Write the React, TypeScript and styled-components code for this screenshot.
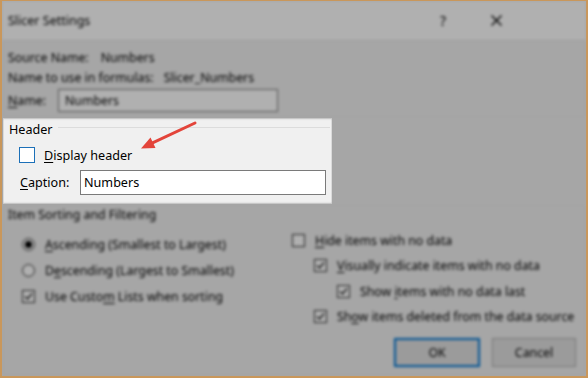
import React, { FC } from 'react';
import styled, { createGlobalStyle, css } from 'styled-components';

const GlobalStyle = createGlobalStyle`
  html, body {
    margin: 0;
    padding: 0;
    background: #a6a6a6;
  }
  body {
    font-family: "Noto Sans", "Open Sans", sans-serif;
    color: #000;
  }
`;

const dimmed = css`
  filter: blur(1.4px) brightness(0.69);
`;

const Window = styled.div`
  position: relative;
  box-sizing: border-box;
  width: 588px;
  height: 378px;
  border: 2px solid #c9975b;
  border-top-width: 1px;
  background: #a6a6a6;
  overflow: hidden;
  display: flex;
  flex-direction: column;
`;

const TitleBar = styled.div`
  ${dimmed};
  height: 39px;
  flex: none;
  display: flex;
  align-items: center;
  padding-left: 6px;
  background: #ffffff;
  font-size: 12.5px;
`;

const Title = styled.div`
  flex: 1;
`;

const TitleButton = styled.div<{ $width: number }>`
  width: ${(p) => p.$width}px;
  height: 39px;
  display: flex;
  align-items: center;
  justify-content: center;
  font-size: 14px;
`;

const TopFields = styled.div`
  ${dimmed};
  flex: none;
  background: #f0f0f0;
  padding: 7px 6px 6px;
  font-size: 12.3px;
`;

const InfoRow = styled.div`
  height: 20px;
  display: flex;
  align-items: center;
`;

const InfoValue = styled.span<{ $left: number }>`
  margin-left: ${(p) => p.$left}px;
`;

const NameRow = styled.div`
  margin-top: 2px;
  height: 23px;
  display: flex;
  align-items: center;
`;

const DimInput = styled.div<{ $width: number }>`
  box-sizing: border-box;
  width: ${(p) => p.$width}px;
  height: 23px;
  margin-left: 12px;
  border: 1px solid #7a7a7a;
  background: #fff;
  padding: 0 6px;
  display: flex;
  align-items: center;
`;

const HeaderRow = styled.div`
  flex: none;
  display: flex;
`;

const HeaderGroup = styled.div`
  box-sizing: border-box;
  width: 329px;
  height: 86px;
  margin-left: 1px;
  background: #f0f0f0;
  border: 1px solid #dadada;
  font-size: 12.6px;
`;

const Legend = styled.div`
  height: 19px;
  display: flex;
  align-items: center;
  gap: 5px;
  padding: 1px 1px 0 5px;

  &::after {
    content: '';
    flex: 1;
    height: 1px;
    margin-top: -4px;
    background: #dcdcdc;
  }
`;

const CheckRow = styled.div`
  height: 22px;
  margin-top: 5px;
  display: flex;
  align-items: center;
  padding-left: 15px;
  gap: 9px;
`;

const FocusBox = styled.div`
  box-sizing: border-box;
  width: 16px;
  height: 16px;
  border: 1px solid #1c70b8;
  background: #fff;
`;

const CaptionRow = styled.div`
  margin-top: 4px;
  display: flex;
  align-items: center;
  padding-left: 16px;
`;

const CaptionLabel = styled.span`
  width: 60px;
`;

const TextInput = styled.div`
  box-sizing: border-box;
  width: 246px;
  height: 25px;
  border: 1px solid #7a7a7a;
  background: #fff;
  padding-left: 3px;
  display: flex;
  align-items: center;
`;

const Key = styled.span`
  text-decoration: underline;
  text-underline-offset: 2px;
`;

const Sorting = styled.div`
  ${dimmed};
  flex: 1;
  background: #f0f0f0;
  padding-left: 6px;
  font-size: 12.3px;
`;

const SectionTitle = styled.div`
  height: 22px;
  line-height: 22px;
`;

const Columns = styled.div`
  display: flex;
`;

const LeftColumn = styled.div`
  box-sizing: border-box;
  width: 284px;
  padding: 5px 0 0 14px;
`;

const RightColumn = styled.div`
  padding-top: 2px;
`;

const OptionRow = styled.div<{ $height: number; $indent?: number }>`
  height: ${(p) => p.$height}px;
  display: flex;
  align-items: center;
  gap: 10px;
  padding-left: ${(p) => p.$indent ?? 0}px;
`;

const Radio = styled.div<{ $on?: boolean }>`
  box-sizing: border-box;
  width: 13px;
  height: 13px;
  border-radius: 50%;
  border: 1px solid #333;
  background: #fff;
  display: flex;
  align-items: center;
  justify-content: center;

  &::after {
    content: '';
    width: 7px;
    height: 7px;
    border-radius: 50%;
    background: ${(p) => (p.$on ? '#000' : 'transparent')};
  }
`;

const Box = styled.div`
  box-sizing: border-box;
  width: 13px;
  height: 13px;
  border: 1px solid #333;
  background: #fff;
  display: flex;
  align-items: center;
  justify-content: center;
`;

const ButtonRow = styled.div`
  margin-top: 9px;
  display: flex;
  justify-content: flex-end;
  gap: 12px;
  padding-right: 10px;
`;

const DialogButton = styled.div<{ $primary?: boolean }>`
  box-sizing: border-box;
  width: ${(p) => (p.$primary ? 86 : 84)}px;
  height: 29px;
  background: #e1e1e1;
  border: ${(p) => (p.$primary ? '2px solid #0078d7' : '1px solid #adadad')};
  display: flex;
  align-items: center;
  justify-content: center;
`;

const Arrow = styled.svg`
  position: absolute;
  left: 0;
  top: 0;
  pointer-events: none;
`;

const Check: FC = () => (
  <svg width="11" height="11" viewBox="0 0 11 11">
    <path d="M2 5.5 L4.5 8 L9 2.5" fill="none" stroke="#222" strokeWidth="1.4" />
  </svg>
);

const CheckOption: FC<{ label: React.ReactNode; indent?: number }> = ({ label, indent }) => (
  <OptionRow $height={25.3} $indent={indent}>
    <Box>
      <Check />
    </Box>
    <span>{label}</span>
  </OptionRow>
);

export default function App() {
  return (
    <>
      <GlobalStyle />
      <Window>
        <TitleBar>
          <Title>Slicer Settings</Title>
          <TitleButton $width={22}>?</TitleButton>
          <TitleButton $width={19} />
          <TitleButton $width={46}>
            <svg width="11" height="11" viewBox="0 0 11 11">
              <path d="M0.5 0.5 L10.5 10.5 M10.5 0.5 L0.5 10.5" stroke="#000" strokeWidth="1.4" />
            </svg>
          </TitleButton>
          <TitleButton $width={67} />
        </TitleBar>

        <TopFields>
          <InfoRow>
            Source Name:<InfoValue $left={12}>Numbers</InfoValue>
          </InfoRow>
          <InfoRow>
            Name to use in formulas:<InfoValue $left={10}>Slicer_Numbers</InfoValue>
          </InfoRow>
          <NameRow>
            <span>
              <Key>N</Key>ame:
            </span>
            <DimInput $width={220}>Numbers</DimInput>
          </NameRow>
        </TopFields>

        <HeaderRow>
          <HeaderGroup>
            <Legend>Header</Legend>
            <CheckRow>
              <FocusBox />
              <span>
                <Key>D</Key>isplay header
              </span>
            </CheckRow>
            <CaptionRow>
              <CaptionLabel>
                <Key>C</Key>aption:
              </CaptionLabel>
              <TextInput>Numbers</TextInput>
            </CaptionRow>
          </HeaderGroup>
        </HeaderRow>

        <Sorting>
          <SectionTitle>Item Sorting and Filtering</SectionTitle>
          <Columns>
            <LeftColumn>
              <OptionRow $height={26}>
                <Radio $on />
                <span>
                  <Key>A</Key>scending (Smallest to Largest)
                </span>
              </OptionRow>
              <OptionRow $height={26}>
                <Radio />
                <span>
                  D<Key>e</Key>scending (Largest to Smallest)
                </span>
              </OptionRow>
              <OptionRow $height={26}>
                <Box>
                  <Check />
                </Box>
                <span>
                  Use Custo<Key>m</Key> Lists when sorting
                </span>
              </OptionRow>
            </LeftColumn>
            <RightColumn>
              <OptionRow $height={25.3}>
                <Box />
                <span>
                  <Key>H</Key>ide items with no data
                </span>
              </OptionRow>
              <CheckOption
                indent={22}
                label={
                  <>
                    <Key>V</Key>isually indicate items with no data
                  </>
                }
              />
              <CheckOption
                indent={45}
                label={
                  <>
                    Show <Key>i</Key>tems with no data last
                  </>
                }
              />
              <CheckOption
                indent={22}
                label={
                  <>
                    Sh<Key>o</Key>w items deleted from the data source
                  </>
                }
              />
            </RightColumn>
          </Columns>
          <ButtonRow>
            <DialogButton $primary>OK</DialogButton>
            <DialogButton>Cancel</DialogButton>
          </ButtonRow>
        </Sorting>

        <Arrow width="588" height="378" viewBox="0 0 588 378">
          <line x1="193" y1="122" x2="150" y2="142.2" stroke="#e3443a" strokeWidth="3" strokeLinecap="round" />
          <polygon points="139,147.5 153.5,147 148.5,136.5" fill="#e3443a" />
        </Arrow>
      </Window>
    </>
  );
}
